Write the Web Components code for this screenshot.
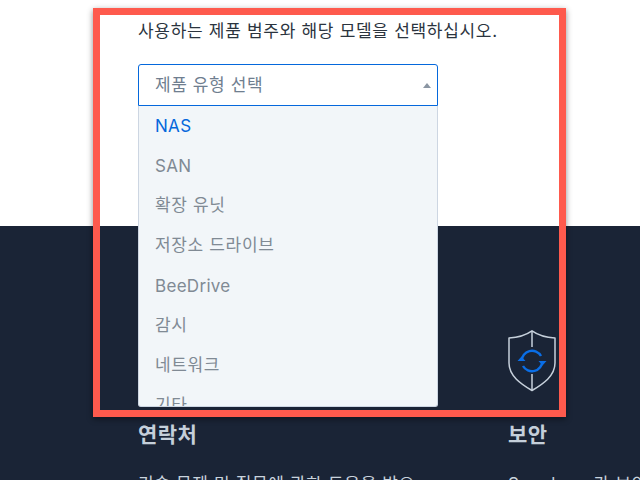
<!DOCTYPE html>
<html lang="ko"><head><meta charset="utf-8">
<style>html,body{margin:0;padding:0;height:480px;overflow:hidden;background:#fff}</style>
</head><body>
<sel-page></sel-page>
<script>
const FONT = `Inter,"Noto Sans CJK KR",sans-serif`;
class SelOption extends HTMLElement{
  constructor(){super();this.attachShadow({mode:'open'}).innerHTML=`<style>
  :host{display:block;height:40px;line-height:39px;padding-left:16px;font-size:17px;letter-spacing:.65px;color:#808a94;white-space:nowrap}
  :host([latin]){line-height:41px;letter-spacing:.3px}
  :host([active]){color:#0568dc}
  </style><slot></slot>`}
}
class SelDropdown extends HTMLElement{
  constructor(){super();this.attachShadow({mode:'open'}).innerHTML=`<style>
  :host{display:block;width:300px;font-family:${FONT}}
  .box{position:relative;box-sizing:border-box;height:42px;border:1px solid #0568dc;border-radius:3px 3px 0 0;background:#fff;display:flex;align-items:center;justify-content:space-between;padding:0 6px 0 16px;font-size:17px;letter-spacing:.6px;color:#6f7e8f}
  .box span:first-child{margin-top:-3px}
  .tri{width:0;height:0;margin-top:1px;border-left:4.500px solid transparent;border-right:4.500px solid transparent;border-bottom:5px solid #8b96a3}
  .list{position:absolute;z-index:1;box-sizing:border-box;width:300px;height:301px;overflow:hidden;background:#f2f6f9;border:1px solid #cdd6e2;border-top:0;border-radius:0 0 3px 3px}
  </style><div class="box"><span>제품 유형 선택</span><span class="tri"></span></div><div class="list"><slot></slot></div>`}
}
class SelFooterCol extends HTMLElement{
  constructor(){super();this.attachShadow({mode:'open'}).innerHTML=`<style>
  :host{display:block;font-family:${FONT};color:#c9d3dd}
  .icon{height:62px;margin-bottom:28px}
  h3{margin:0 0 22px;font-size:21px;line-height:30px;font-weight:700;letter-spacing:.4px;color:#c5cfda}
  p{margin:0;font-size:17px;line-height:24px;letter-spacing:.65px;white-space:nowrap}
  </style><div class="icon"><slot name="icon"></slot></div><h3><slot name="title"></slot></h3><p><slot></slot></p>`}
}
class SelPage extends HTMLElement{
  constructor(){super();this.attachShadow({mode:'open'}).innerHTML=`<style>
  :host{display:block;position:relative;width:640px;height:480px;overflow:hidden;font-family:${FONT}}
  .top{height:226px;box-sizing:border-box;padding:20px 0 0 138px;background:#fff}
  .top p{margin:0 0 21px;font-size:17px;letter-spacing:.7px;line-height:23px;color:#2b343e;white-space:nowrap}
  .foot{height:254px;box-sizing:border-box;background:#1a2436;display:grid;grid-template-columns:370px 1fr;padding:104px 0 0 138px}
  .mark{position:absolute;left:93px;top:8px;width:473px;height:409px;box-sizing:border-box;border:7px solid #fe5a4d;box-shadow:0 2px 6px rgba(0,0,0,.45);z-index:2;pointer-events:none}
  svg{display:block}
  </style>
  <div class="top"><p>사용하는 제품 범주와 해당 모델을 선택하십시오.</p>
  <sel-dropdown>
    <sel-option active latin>NAS</sel-option><sel-option latin>SAN</sel-option><sel-option>확장 유닛</sel-option><sel-option>저장소 드라이브</sel-option><sel-option latin>BeeDrive</sel-option><sel-option>감시</sel-option><sel-option>네트워크</sel-option><sel-option>기타</sel-option>
  </sel-dropdown></div>
  <div class="foot">
    <sel-footer-col><span slot="title">연락처</span>기술 문제 및 질문에 관한 도움을 받으</sel-footer-col>
    <sel-footer-col>
      <svg slot="icon" width="48" height="62" viewBox="0 0 48 62" fill="none">
        <path d="M24 .8C18 5 9 7.500 1 8V33C1 46 13 54 24 60.500C35 54 47 46 47 33V8C39 7.500 30 5 24 .8Z" stroke="#c6d0db" stroke-width="1.500" stroke-linejoin="round"/>
        <path d="M24 1V17M24 44V60" stroke="#c6d0db" stroke-width="1.500"/>
        <path d="M13.700 31A10.300 10.300 0 0 1 33 26M34.300 31A10.300 10.300 0 0 1 15 36" stroke="#0a6ee6" stroke-width="2.400"/>
        <path d="M9.500 31H17.500L13.500 26.500ZM30.500 31H38.500L34.500 35.500Z" fill="#0a6ee6"/>
      </svg>
      <span slot="title">보안</span>Synology 가 보안
    </sel-footer-col>
  </div>
  <div class="mark"></div>`}
}
customElements.define('sel-option',SelOption);
customElements.define('sel-dropdown',SelDropdown);
customElements.define('sel-footer-col',SelFooterCol);
customElements.define('sel-page',SelPage);
</script>
</body></html>
